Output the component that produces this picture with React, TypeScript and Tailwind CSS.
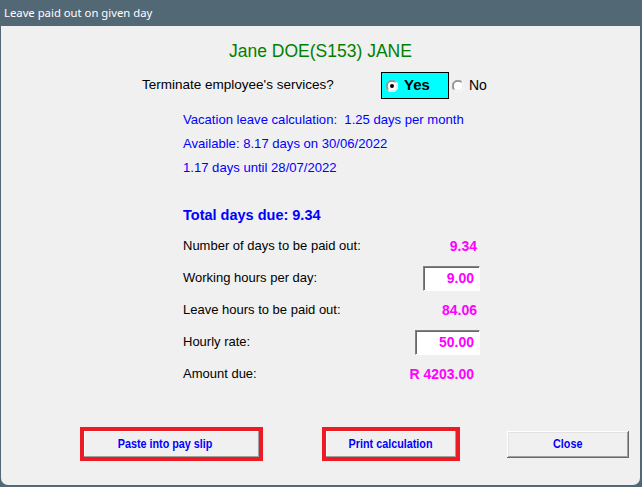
import React from "react";

const sans = { fontFamily: '"Liberation Sans", Arial, sans-serif' };

function Radio({ checked }: { checked: boolean }) {
  return (
    <svg width="12" height="12" viewBox="0 0 12 12" className="shrink-0">
      <circle cx="6" cy="6" r="5.5" fill="#fff" />
      <path d="M1.8 10.2 A5.5 5.5 0 0 1 10.2 1.8" stroke="#a0a0a0" strokeWidth="1" fill="none" />
      <path d="M2.5 9.5 A4.5 4.5 0 0 1 9.5 2.5" stroke="#696969" strokeWidth="1" fill="none" />
      <path d="M10.2 1.8 A5.5 5.5 0 0 1 1.8 10.2" stroke="#ffffff" strokeWidth="1" fill="none" />
      <path d="M9.5 2.5 A4.5 4.5 0 0 1 2.5 9.5" stroke="#e3e3e3" strokeWidth="1" fill="none" />
      {checked ? <circle cx="6" cy="6" r="2" fill="#000" /> : null}
    </svg>
  );
}

function Field({ value, width }: { value: string; width: string }) {
  return (
    <div
      className={`${width} flex h-[25px] items-center justify-end border border-b-white border-l-[#808080] border-r-white border-t-[#808080] bg-white pr-[5px] shadow-[inset_1px_1px_#696969] text-[14px] font-bold text-[#ff00ff]`}
    >
      {value}
    </div>
  );
}

function Row({ label, children }: { label: string; children: React.ReactNode }) {
  return (
    <div className="flex h-[32px] w-[297px] items-center justify-between">
      <span className="text-[13px] text-black">{label}</span>
      {children}
    </div>
  );
}

// narrow bold caption used on the dialog buttons
function Caption({ children }: { children: React.ReactNode }) {
  return <span className="inline-block scale-x-[0.83] text-[13px] font-bold text-[#0000ff]">{children}</span>;
}

export default function App() {
  return (
    <div className="flex h-[487px] w-[642px] flex-col bg-[#536875]" style={sans}>
      <div
        className="flex h-[26px] items-center pl-[4px] text-[11.3px] text-white"
        style={{ fontFamily: '"Segoe UI", "Noto Sans", sans-serif' }}
      >
        Leave paid out on given day
      </div>

      <div className="mb-[2px] ml-[1px] mr-[2px] flex flex-1 flex-col rounded-b-[7px] bg-[#f0f0f0]">
        <div className="mt-[15px] text-center text-[17.5px] leading-[20px] text-[#008000]">
          Jane DOE(S153) JANE
        </div>

        <div className="ml-[141px] mt-[11px] flex h-[27px] items-center">
          <span className="w-[239px] text-[13.5px] text-black">Terminate employee's services?</span>
          <div className="flex h-[27px] w-[68px] items-center border border-black bg-[#00ffff] pl-[4px]">
            <Radio checked />
            <span className="ml-[6px] text-[15px] font-bold text-black">Yes</span>
          </div>
          <div className="ml-[3px] flex items-center">
            <Radio checked={false} />
            <span className="ml-[5px] text-[14px] text-black">No</span>
          </div>
        </div>

        <div className="ml-[182px] mt-[9px] flex flex-col text-[13.1px] text-[#0000ff]">
          <div className="flex h-[24px] items-center whitespace-pre">Vacation leave calculation:  1.25 days per month</div>
          <div className="flex h-[24px] items-center">Available: 8.17 days on 30/06/2022</div>
          <div className="flex h-[24px] items-center">1.17 days until 28/07/2022</div>
          <div className="mt-[24px] flex h-[24px] items-center text-[14.5px] font-bold">Total days due: 9.34</div>
        </div>

        <div className="ml-[182px] mt-[2px] flex flex-col">
          <Row label="Number of days to be paid out:">
            <span className="pr-[3px] text-[14px] font-bold text-[#ff00ff]">9.34</span>
          </Row>
          <Row label="Working hours per day:">
            <Field value="9.00" width="w-[57px]" />
          </Row>
          <Row label="Leave hours to be paid out:">
            <span className="pr-[3px] text-[14px] font-bold text-[#ff00ff]">84.06</span>
          </Row>
          <Row label="Hourly rate:">
            <Field value="50.00" width="w-[65px]" />
          </Row>
          <Row label="Amount due:">
            <span className="pr-[6px] text-[14px] font-bold text-[#ff00ff]">R 4203.00</span>
          </Row>
        </div>

        <div className="mb-[24px] mt-auto flex h-[34px] items-center pl-[79px]">
          <button className="flex h-[34px] w-[183px] items-center justify-center border-4 border-[#ed1c24] bg-[#f0f0f0] pr-[12px] shadow-[inset_-1px_-1px_#a0a0a0,inset_1px_1px_#fff]">
            <Caption>Paste into pay slip</Caption>
          </button>
          <button className="ml-[59px] flex h-[34px] w-[138px] items-center justify-center border-4 border-[#ed1c24] bg-[#f0f0f0] shadow-[inset_-1px_-1px_#a0a0a0,inset_1px_1px_#fff]">
            <Caption>Print calculation</Caption>
          </button>
          <button className="ml-[47px] flex h-[27px] w-[122px] items-center justify-center bg-[#f0f0f0] shadow-[inset_-1px_-1px_#696969,inset_1px_1px_#fff,inset_-2px_-2px_#a0a0a0,inset_2px_2px_#e3e3e3]">
            <Caption>Close</Caption>
          </button>
        </div>
      </div>
    </div>
  );
}
